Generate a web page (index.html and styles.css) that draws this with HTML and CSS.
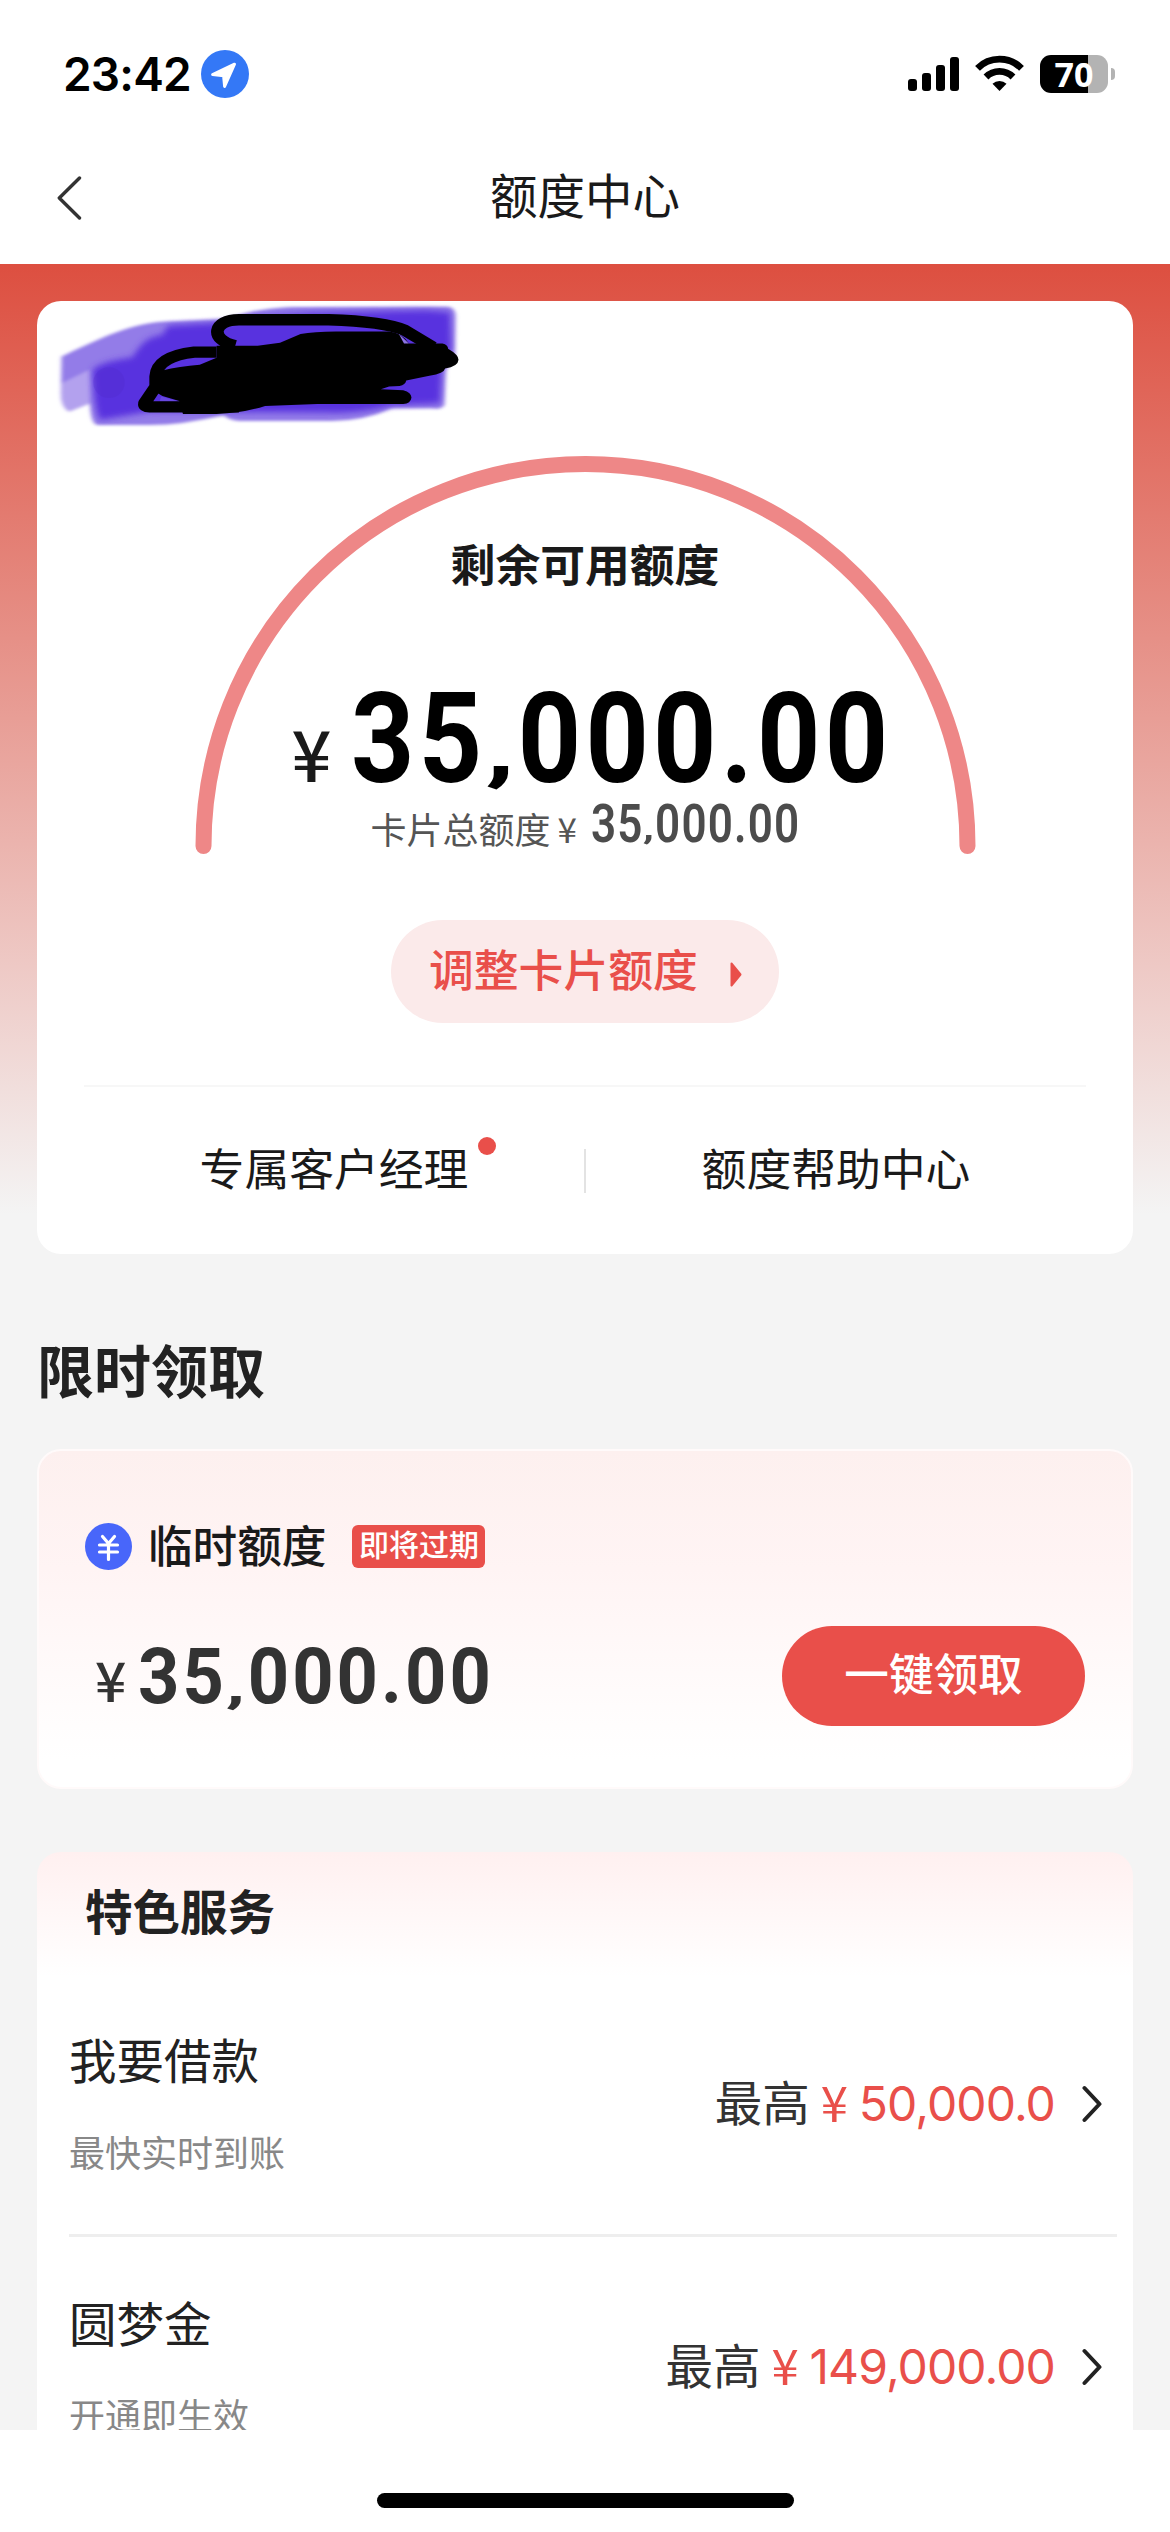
FILE: index.html
```html
<!DOCTYPE html>
<html lang="zh-CN">
<head>
<meta charset="utf-8">
<title>额度中心</title>
<link rel="stylesheet" href="styles.css">
</head>
<body>
<div class="phone">
  <header class="status">
    <div class="status-left">
      <span class="clock">23:42</span>
      <svg class="location" width="48" height="48" viewBox="0 0 48 48"><circle cx="24" cy="24" r="24" fill="#3478f6"/><path d="M33.5 14.2 23.6 36.4 22.600 25.800 11.600 24.500Z" fill="#fff" stroke="#fff" stroke-width="3" stroke-linejoin="round"/></svg>
    </div>
    <div class="status-right">
      <svg width="51" height="34" viewBox="0 0 51 34"><rect x="0" y="22" width="9" height="12" rx="3"/><rect x="14" y="16" width="9" height="18" rx="3"/><rect x="28" y="8" width="9" height="26" rx="3"/><rect x="42" y="0" width="9" height="34" rx="3"/></svg>
      <svg class="wifi" width="49" height="36" viewBox="0 0 49 36"><path d="M2.500 13.300a31 31 0 0 1 44 0M11 22a19 19 0 0 1 27 0" fill="none" stroke="#000" stroke-width="6.800"/><path d="M24.500 36 17.500 28.800a10 10 0 0 1 14 0Z"/></svg>
      <div class="battery"><span class="battery-level">70</span><i class="battery-nub"></i></div>
    </div>
  </header>
  <nav class="nav">
    <svg class="back" width="26" height="44" viewBox="0 0 26 44"><path d="M22.500 2 2.300 22 22.500 42" fill="none" stroke="#333" stroke-width="3.400" stroke-linecap="round" stroke-linejoin="round"/></svg>
    <h1 class="nav-title">额度中心</h1>
  </nav>

  <main class="content">
    <section class="card quota">
      <svg class="redaction" width="407" height="127" viewBox="150 130 1090 380" preserveAspectRatio="none">
        <defs>
          <filter id="soft" x="-5%" y="-5%" width="110%" height="110%"><feGaussianBlur stdDeviation="5"/></filter>
          <filter id="softer" x="-5%" y="-10%" width="110%" height="120%"><feGaussianBlur stdDeviation="9"/></filter>
        </defs>
        <g filter="url(#soft)">
          <path d="M165 290C250 245 340 195 430 186L600 178C680 150 740 142 800 142L1200 141Q1220 145 1220 170L1218 290 1194 330 1190 435Q1180 450 1160 445L1050 445Q970 485 880 483L640 483Q610 480 600 465Q490 495 400 495L260 495Q243 490 241 430L185 455Q163 440 163 400Z" fill="#937ce8"/>
          <path d="M165 370 240 330 241 430 185 455Q163 440 163 400Z" fill="#b3a1ee"/>
        </g>
        <g filter="url(#softer)">
          <path d="M248 330Q270 305 355 292C380 250 390 235 435 225L450 198 600 188 690 172 840 160 1140 152 1205 158 1208 270 1182 330 1178 430 1050 436Q960 462 880 458L620 456 400 455 268 480Q252 450 248 330Z" fill="#5932df"/>
        </g>
        <ellipse cx="292" cy="368" rx="42" ry="46" fill="#512bc9" opacity=".3"/>
        <path d="M630 258C560 240 570 180 640 180L880 180Q1030 185 1085 212L1160 262" fill="none" stroke="#000" stroke-width="34"/>
        <path d="M580 277H520Q420 290 417 350V380L387 430Q385 441 400 441H640" fill="none" stroke="#000" stroke-width="34" stroke-linejoin="round"/>
        <path d="M580 258H690L750 249 805 223Q840 215 900 215H1040Q1075 217 1095 251H1185Q1200 255 1200 267Q1228 285 1228 300Q1227 320 1192 326Q1190 340 1150 348L1088 362Q1086 375 1070 378L1042 380 1020 388 1080 391Q1102 398 1102 413 1100 432 1080 432L850 432 710 438Q650 460 580 462L490 462 480 423 435 408 400 385 435 332Q480 320 535 315L580 294Z"/>
        <path d="M432 410 475 423H428Z" fill="#6848df"/>
        <path d="M1068 222 1095 251H1082Z" fill="#8c74e5"/>
      </svg>

      <div class="gauge">
        <svg class="gauge-arc" width="781" height="398" viewBox="0 0 781 398"><path d="M8.500 390A382 382 0 0 1 772.500 390" fill="none" stroke="#ee8787" stroke-width="16" stroke-linecap="round"/></svg>
        <div class="gauge-label">剩余可用额度</div>
        <div class="gauge-amount"><span class="yen">¥</span><span class="din">35<span class="comma">,</span>000.00</span></div>
        <div class="gauge-total"><span>卡片总额度</span><span class="yen">¥</span><span class="din">35<span class="comma">,</span>000.00</span></div>
      </div>

      <a class="adjust"><span>调整卡片额度</span><svg width="12" height="25" viewBox="0 0 12 25"><path d="M1.500 1.500 10.500 12.500 1.500 23.500Z" fill="#e94f4a" stroke="#e94f4a" stroke-width="2" stroke-linejoin="round"/></svg></a>

      <div class="links">
        <a class="link"><span class="link-text">专属客户经理<i class="dot"></i></span></a>
        <i class="links-divider"></i>
        <a class="link"><span class="link-text">额度帮助中心</span></a>
      </div>
    </section>

    <h2 class="section-title">限时领取</h2>

    <section class="card offer">
      <div class="offer-head">
        <svg width="47" height="47" viewBox="0 0 47 47"><circle cx="23.500" cy="23.500" r="23.500" fill="#4866fa"/><path d="M17.500 13.500 23.500 20.500 29.500 13.500M23.500 20.500V36.500M14.500 22H32.500M14.500 29H32.500" fill="none" stroke="#fff" stroke-width="3.200" stroke-linecap="round" stroke-linejoin="round"/></svg>
        <span class="offer-name">临时额度</span>
        <span class="badge">即将过期</span>
      </div>
      <div class="offer-body">
        <div class="offer-amount"><span class="yen">¥</span><span class="din">35<span class="comma">,</span>000.00</span></div>
        <a class="claim">一键领取</a>
      </div>
    </section>

    <section class="card services">
      <h3 class="services-title">特色服务</h3>
      <div class="service">
        <div class="service-info"><div class="service-name">我要借款</div><div class="service-note">最快实时到账</div></div>
        <div class="service-max"><span class="max-label">最高</span><span class="yen">¥</span><span class="max-value">50,000.0</span><svg width="20" height="38" viewBox="0 0 20 38"><path d="M2.500 3 17.500 19 2.500 35" fill="none" stroke="#222" stroke-width="4" stroke-linecap="round" stroke-linejoin="round"/></svg></div>
      </div>
      <div class="service">
        <div class="service-info"><div class="service-name">圆梦金</div><div class="service-note">开通即生效</div></div>
        <div class="service-max"><span class="max-label">最高</span><span class="yen">¥</span><span class="max-value">149,000.00</span><svg width="20" height="38" viewBox="0 0 20 38"><path d="M2.500 3 17.500 19 2.500 35" fill="none" stroke="#222" stroke-width="4" stroke-linecap="round" stroke-linejoin="round"/></svg></div>
      </div>
    </section>
  </main>

  <footer class="home"><i class="home-bar"></i></footer>
</div>
</body>
</html>
```
FILE: styles.css
```css
* { box-sizing: border-box; }
body {
  margin: 0;
  background: #fff;
  color: #1a1a1a;
  font-family: "Noto Sans CJK SC", sans-serif;
}
h1, h2, h3 { margin: 0; font-weight: 700; }
svg { display: block; flex: none; }
i { display: block; }

.phone {
  width: 1170px;
  height: 2532px;
  display: flex;
  flex-direction: column;
  overflow: hidden;
}

/* status bar */
.status {
  flex: none;
  height: 132px;
  padding: 50px 55px 34px 63px;
  display: flex;
  justify-content: space-between;
  align-items: center;
}
.status-left { display: flex; align-items: center; gap: 8px; }
.clock {
  width: 130px;
  font: 600 46px/48px Inter, sans-serif;
  letter-spacing: -0.8px;
  white-space: nowrap;
  color: #000;
}
.status-right { display: flex; align-items: center; gap: 16px; }
.wifi { margin-top: -2px; }
.battery {
  position: relative;
  width: 68px;
  height: 38px;
  margin-right: 7px;
  border-radius: 11px;
  background: linear-gradient(90deg, #000 48px, #b3b3b3 48px);
  display: flex;
  justify-content: center;
}
.battery-level { color: #fff; font: 700 34px/38px "Noto Sans", sans-serif; }
.battery-nub {
  position: absolute;
  left: 71px;
  top: 13px;
  width: 4px;
  height: 12px;
  border-radius: 0 4px 4px 0;
  background: #b3b3b3;
}

/* title bar */
.nav {
  flex: none;
  height: 132px;
  padding: 0 57px;
  display: grid;
  grid-template-columns: 26px 1fr 26px;
  align-items: center;
}
.nav-title {
  padding-bottom: 8px;
  text-align: center;
  font-size: 47.5px;
  font-weight: 400;
  line-height: 60px;
}

.content {
  flex: none;
  height: 2166px;
  padding: 37px 37px 0;
  overflow: hidden;
  background: #f4f4f4 linear-gradient(#dd4f40, #f4f4f4 950px);
}
.card { border-radius: 24px; background: #fff; }
.din {
  font-family: Roboto, sans-serif;
  font-weight: 700;
  white-space: nowrap;
}
/* short comma that barely drops under the baseline */
.comma {
  display: inline-block;
  transform: scale(1.1, .62);
  transform-origin: 50% 72%;
}
.yen { font-weight: 400; }

/* quota card */
.quota {
  position: relative;
  height: 953px;
  padding: 155px 47px 0;
  display: flex;
  flex-direction: column;
  align-items: center;
}
.redaction { position: absolute; left: 19px; top: 2px; }
.gauge {
  position: relative;
  width: 781px;
  height: 398px;
  padding-top: 77px;
}
.gauge-arc { position: absolute; left: 0; top: 0; }
.gauge-label {
  text-align: center;
  font-size: 44.8px;
  font-weight: 700;
  line-height: 60px;
}
.gauge-amount {
  height: 110px;
  margin-top: 91px;
  padding-left: 97px;
  display: flex;
  line-height: 110px;
  color: #000;
}
.gauge-amount .yen {
  width: 59px;
  padding-top: 13px;
  font-size: 70px;
  font-weight: 500;
  color: #1a1a1a;
}
.gauge-amount .din {
  font-size: 127px;
  letter-spacing: 4.9px;
  transform: scaleX(.87);
  transform-origin: 0 50%;
}
.gauge-total {
  height: 50px;
  margin-top: 9px;
  padding-left: 176px;
  display: flex;
  font-size: 36px;
  line-height: 50px;
  color: #555;
}
.gauge-total .yen { width: 40px; padding-left: 7px; font-size: 35px; }
.gauge-total .din {
  margin-top: -4px;
  font-size: 53px;
  font-weight: 600;
  transform: scaleX(.83);
  transform-origin: 0 50%;
  letter-spacing: 1.4px;
  color: #4c4c4c;
}
.adjust {
  width: 388px;
  height: 103px;
  margin-top: 66px;
  padding-left: 38px;
  border-radius: 52px;
  background: #fbeaea;
  color: #e94f4a;
  display: flex;
  align-items: center;
  gap: 32px;
  font-size: 44.8px;
  font-weight: 500;
  line-height: 60px;
}
.adjust span { padding-bottom: 8px; }
.adjust svg { margin-top: 5px; }
.links {
  align-self: stretch;
  height: 169px;
  margin-top: 62px;
  border-top: 2px solid #f7f7f7;
  display: grid;
  grid-template-columns: 1fr 2px 1fr;
  align-items: center;
}
.link { padding-bottom: 8px; text-align: center; }
.link-text {
  position: relative;
  display: inline-block;
  font-size: 44.8px;
  line-height: 60px;
}
.dot {
  position: absolute;
  right: -28px;
  top: 0;
  width: 18px;
  height: 18px;
  border-radius: 50%;
  background: #e94f4a;
}
.links-divider { height: 44px; background: #e3e3e3; }

.section-title {
  margin: 74px 0 41px;
  font-size: 57px;
  line-height: 80px;
  color: #222;
}

/* limited-time offer */
.offer {
  height: 340px;
  padding: 65px 46px 0;
  border: 2px solid #fffafa;
  background: linear-gradient(#fdf0ef, #fff4f4 35%, #fff 92%);
}
.offer-head { height: 60px; display: flex; align-items: center; }
.offer-name {
  margin: 0 26px 0 16px;
  padding-bottom: 5px;
  font-size: 44.6px;
  font-weight: 500;
  line-height: 54px;
}
.badge {
  width: 133px;
  height: 43px;
  border-radius: 6px;
  background: #e94f4a;
  color: #fff;
  text-align: center;
  font-size: 30px;
  font-weight: 500;
  line-height: 37px;
}
.offer-body {
  margin-top: 50px;
  display: flex;
  justify-content: space-between;
}
.offer-amount {
  padding-left: 10px;
  display: flex;
  line-height: 102px;
  color: #333;
}
.offer-amount .yen { width: 43px; padding-top: 1px; font-size: 55px; font-weight: 500; }
.offer-amount .din {
  font-size: 78px;
  letter-spacing: 3.3px;
  transform: scaleX(.925);
  transform-origin: 0 50%;
}
.claim {
  width: 303px;
  height: 100px;
  border-radius: 50px;
  background: #e94f4a;
  color: #fff;
  text-align: center;
  font-size: 44.6px;
  font-weight: 500;
  line-height: 92px;
}

/* services */
.services {
  height: 700px;
  margin-top: 63px;
  padding: 28px 16px 0 32px;
  background: linear-gradient(#fff0f0, #fff 125px);
}
.services-title {
  margin: 0 0 34px 16px;
  font-size: 47.5px;
  line-height: 60px;
  color: #222;
}
.service {
  height: 263px;
  border-bottom: 3px solid #eee;
  padding-right: 15px;
  display: flex;
  justify-content: space-between;
  align-items: center;
}
.service-info { align-self: flex-start; padding-top: 55px; }
.service-name { font-size: 47.5px; line-height: 60px; color: #222; }
.service-note { margin-top: 37px; font-size: 36px; line-height: 50px; color: #888; }
.service-max {
  display: flex;
  align-items: center;
  font-size: 48px;
  line-height: 60px;
  color: #e94f4a;
}
.max-label { padding-bottom: 6px; color: #333; font-size: 47.5px; }
.service-max .yen { width: 43px; padding: 0 0 6px 11px; font-size: 49px; }
.max-value {
  margin: 0 27px 0 6px;
  font-family: Inter, sans-serif;
  font-weight: 400;
  letter-spacing: -0.9px;
}

.home { flex: 1; background: #fff; padding-top: 63px; }
.home-bar {
  width: 417px;
  height: 15px;
  margin: 0 auto;
  border-radius: 8px;
  background: #000;
}
```
